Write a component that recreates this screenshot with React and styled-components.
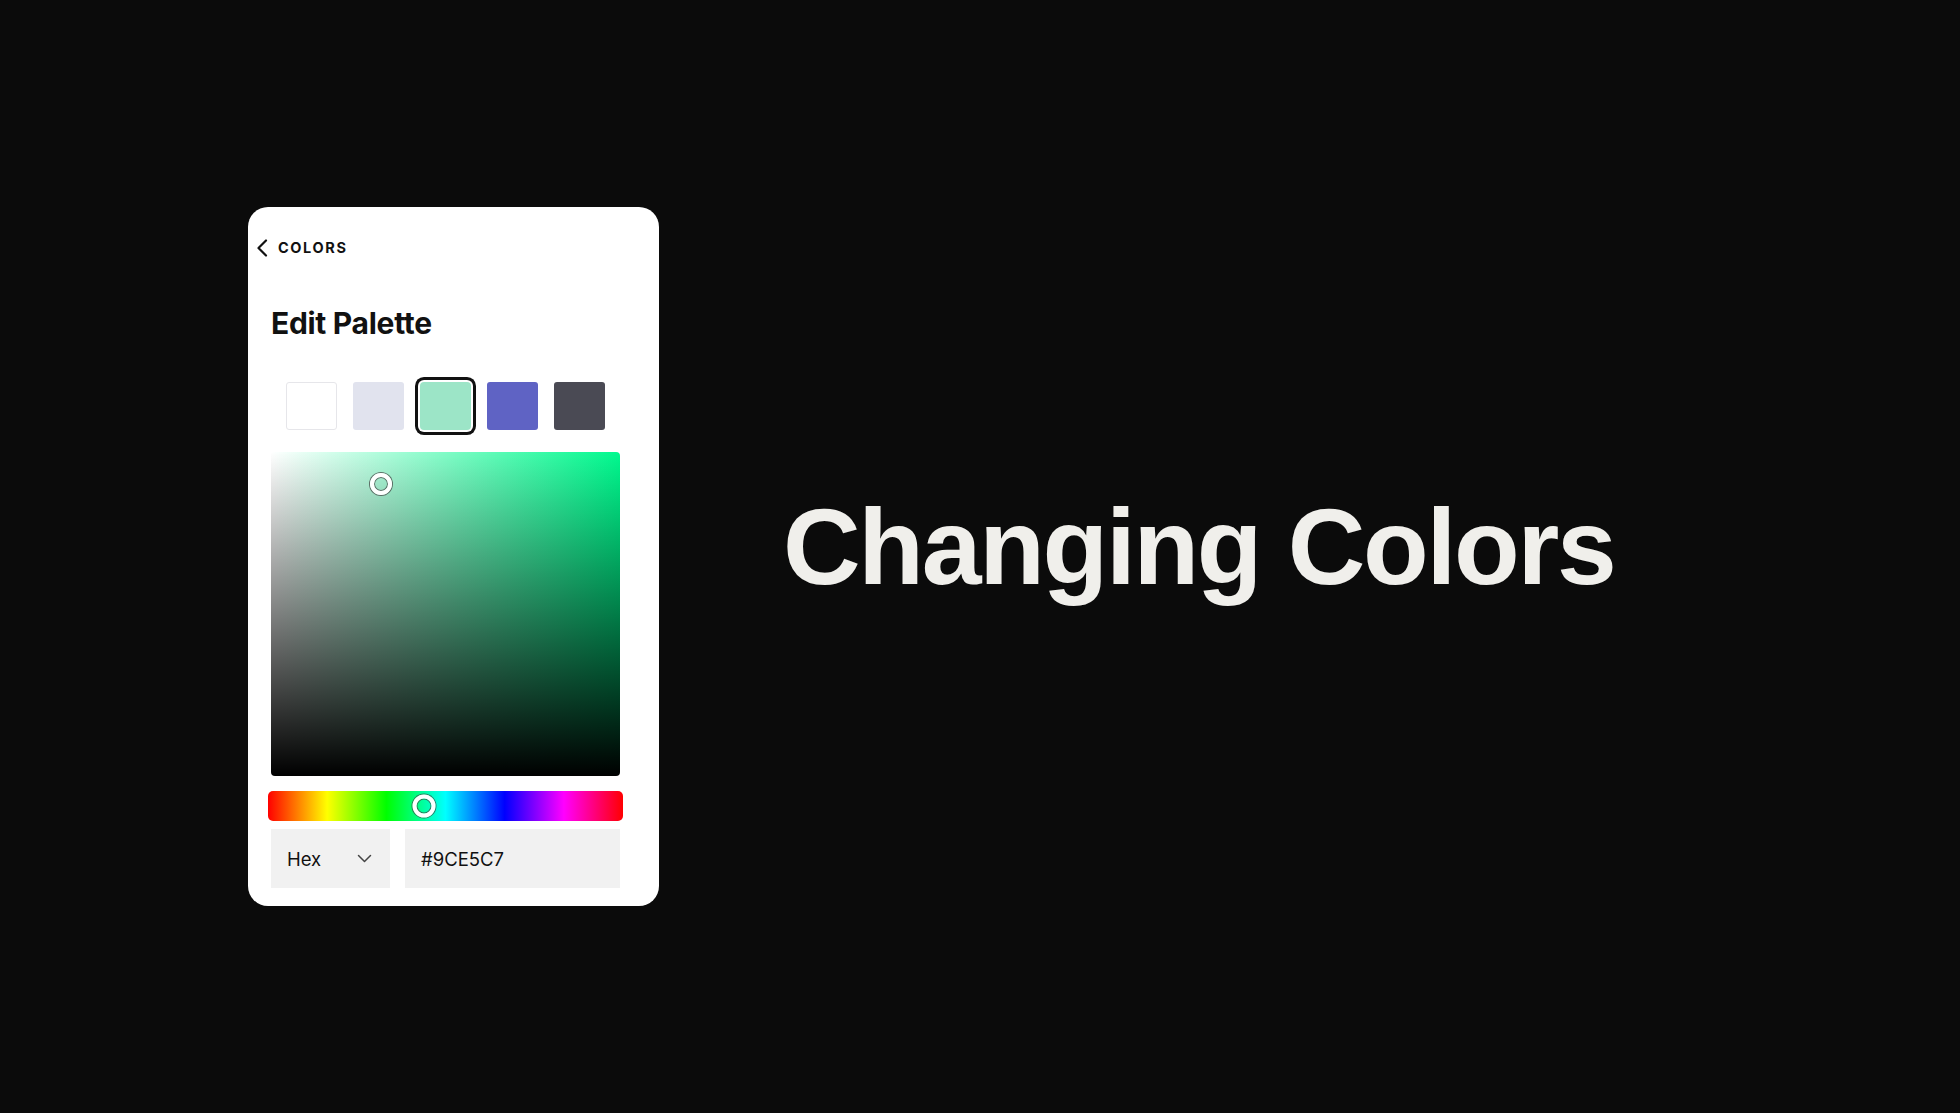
import React from "react";
import styled, { createGlobalStyle } from "styled-components";

const Global = createGlobalStyle`
  html, body { margin: 0; padding: 0; background: #0b0b0b; }
  body { font-family: Inter, "Noto Sans", sans-serif; }
  * { box-sizing: border-box; }
`;

const Stage = styled.main`
  height: 100vh;
  display: flex;
  align-items: center;
  padding-left: 248px;
  gap: 124px;
`;

const Card = styled.section`
  width: 411px;
  background: #ffffff;
  border-radius: 20px;
  padding: 31px 39px 18px 23px;
  display: flex;
  flex-direction: column;
`;

const BackRow = styled.div`
  display: flex;
  align-items: center;
  height: 20px;
  margin-left: -15px;
  gap: 10px;
`;

const BackLabel = styled.span`
  font-size: 14.5px;
  font-weight: 700;
  letter-spacing: 1.6px;
  color: #111;
  line-height: 1;
  padding-top: 1px;
`;

const Title = styled.h1`
  margin: 47px 0 0 0;
  font-size: 30px;
  line-height: 36px;
  font-weight: 700;
  color: #111;
  letter-spacing: -0.3px;
`;

const Swatches = styled.div`
  margin-top: 41px;
  display: flex;
  justify-content: center;
  gap: 16px;
`;

const Swatch = styled.div`
  width: 51px;
  height: 48px;
  border-radius: 3px;
  background: ${(p) => p.$color};
  border: ${(p) => (p.$outlined ? "1px solid #e6e6ea" : "none")};
  box-shadow: ${(p) =>
    p.$selected ? "0 0 0 2px #ffffff, 0 0 0 5px #111111" : "none"};
  ${(p) => (p.$selected ? "border-radius: 4px;" : "")}
`;

const SVField = styled.div`
  position: relative;
  margin-top: 22px;
  height: 324px;
  border-radius: 4px;
  background: linear-gradient(to top, #000 0%, rgba(0, 0, 0, 0) 100%),
    linear-gradient(to right, #ffffff 0%, #00f98e 100%);
`;

const Handle = styled.div`
  position: absolute;
  width: ${(p) => p.$size}px;
  height: ${(p) => p.$size}px;
  border-radius: 50%;
  border: 4px solid #ffffff;
  box-shadow: 0 0 0 1px rgba(70, 70, 70, 0.75),
    inset 0 0 0 1px rgba(70, 70, 70, 0.75);
  transform: translate(-50%, -50%);
`;

const HueBar = styled.div`
  position: relative;
  margin: 15px -3px 0 -3px;
  height: 30px;
  border-radius: 5px;
  background: linear-gradient(
    to right,
    #ff0000 0%,
    #ffff00 16.66%,
    #00ff00 33.33%,
    #00ffff 50%,
    #0000ff 66.66%,
    #ff00ff 83.33%,
    #ff0000 100%
  );
`;

const Inputs = styled.div`
  margin-top: 8px;
  display: flex;
  gap: 15px;
`;

const Field = styled.div`
  height: 59px;
  background: #f1f1f1;
  display: flex;
  align-items: center;
  justify-content: space-between;
  padding: 0 16px;
  font-size: 18.5px;
  color: #111;
  ${(p) => (p.$grow ? "flex: 1;" : "width: 119px; padding-right: 18px;")}
`;

const Headline = styled.h2`
  margin: 0 0 20px 0;
  font-family: "Liberation Sans", Arial, sans-serif;
  font-weight: 700;
  font-size: 107.5px;
  line-height: 110px;
  letter-spacing: -2.3px;
  color: #f0efeb;
  white-space: nowrap;
`;

const swatches = [
  { color: "#ffffff", outlined: true },
  { color: "#e1e3ee" },
  { color: "#9ce5c7", selected: true },
  { color: "#5f63c4" },
  { color: "#4a4a54" },
];

export default function App() {
  return (
    <>
      <Global />
      <Stage>
        <Card>
          <BackRow>
            <svg width="12" height="18" viewBox="0 0 12 18" fill="none">
              <path
                d="M10 1.5 L2.5 9 L10 16.5"
                stroke="#111"
                strokeWidth="2.2"
                strokeLinecap="round"
                strokeLinejoin="round"
              />
            </svg>
            <BackLabel>COLORS</BackLabel>
          </BackRow>
          <Title>Edit Palette</Title>
          <Swatches>
            {swatches.map((s, i) => (
              <Swatch
                key={i}
                $color={s.color}
                $outlined={s.outlined}
                $selected={s.selected}
              />
            ))}
          </Swatches>
          <SVField>
            <Handle $size={22} style={{ left: "110px", top: "32px" }} />
          </SVField>
          <HueBar>
            <Handle $size={23} style={{ left: "44%", top: "50%" }} />
          </HueBar>
          <Inputs>
            <Field>
              <span>Hex</span>
              <svg width="15" height="9" viewBox="0 0 15 9" fill="none">
                <path
                  d="M1.5 1.5 L7.5 7.5 L13.5 1.5"
                  stroke="#444"
                  strokeWidth="1.5"
                  strokeLinecap="round"
                  strokeLinejoin="round"
                />
              </svg>
            </Field>
            <Field $grow>
              <span>#9CE5C7</span>
            </Field>
          </Inputs>
        </Card>
        <Headline>Changing Colors</Headline>
      </Stage>
    </>
  );
}
